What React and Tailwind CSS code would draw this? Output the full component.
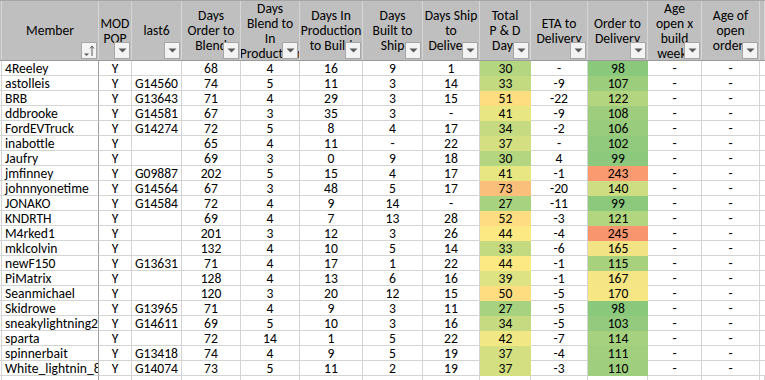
import React from 'react';

// column widths, in px, left to right (first and last are the neighbouring slivers)
const cols = [
  { w: 'w-[2px]' },
  { w: 'w-[97px]', head: ['Member'], sort: true, left: true },
  { w: 'w-[33px]', head: ['MOD', 'POP'] },
  { w: 'w-[50px]', head: ['last6'] },
  { w: 'w-[59px]', head: ['Days', 'Order to', 'Blend'] },
  { w: 'w-[59px]', head: ['Days', 'Blend to', 'In', 'Production'] },
  { w: 'w-[63px]', head: ['Days In', 'Production', 'to Build'] },
  { w: 'w-[60px]', head: ['Days', 'Built to', 'Ship'] },
  { w: 'w-[57px]', head: ['Days Ship', 'to', 'Delivery'] },
  { w: 'w-[51px]', head: ['Total', 'P & D', 'Days'] },
  { w: 'w-[57px]', head: ['ETA to', 'Delivery'] },
  { w: 'w-[60px]', head: ['Order to', 'Delivery'] },
  { w: 'w-[54px]', head: ['Age', 'open x', 'build', 'weeks'] },
  { w: 'w-[58px]', head: ['Age of', 'open', 'orders'] },
  { w: 'w-[5px]' },
];

// member, mod pop, last6, order>blend, blend>prod, prod>build, built>ship, ship>deliver, total, eta, order>delivery
const rows = [
  ['4Reeley', 'Y', '', 68, 4, 16, 9, 1, 30, '-', 98, 'bg-[#b5d680]', 'bg-[#8ac97c]'],
  ['astolleis', 'Y', 'G14560', 74, 5, 11, 3, 14, 33, -9, 107, 'bg-[#c3da81]', 'bg-[#9bcd7d]'],
  ['BRB', 'Y', 'G13643', 71, 4, 29, 3, 15, 51, -22, 122, 'bg-[#fedd81]', 'bg-[#b4d57f]'],
  ['ddbrooke', 'Y', 'G14581', 67, 3, 35, 3, '-', 41, -9, 108, 'bg-[#e8e583]', 'bg-[#9dcd7d]'],
  ['FordEVTruck', 'Y', 'G14274', 72, 5, 8, 4, 17, 34, -2, 106, 'bg-[#c6db81]', 'bg-[#99cc7d]'],
  ['inabottle', 'Y', '', 65, 4, 11, '-', 22, 37, '-', 102, 'bg-[#d4df82]', 'bg-[#92ca7d]'],
  ['Jaufry', 'Y', '', 69, 3, 0, 9, 18, 30, 4, 99, 'bg-[#b5d680]', 'bg-[#8cc97c]'],
  ['jmfinney', 'Y', 'G09887', 202, 5, 15, 4, 17, 41, -1, 243, 'bg-[#e8e583]', 'bg-[#f99a71]'],
  ['johnnyonetime', 'Y', 'G14564', 67, 3, 48, 5, 17, 73, -20, 140, 'bg-[#fbbf7c]', 'bg-[#cfdd82]'],
  ['JONAKO', 'Y', 'G14584', 72, 4, 9, 14, '-', 27, -11, 99, 'bg-[#a7d27f]', 'bg-[#8cc97c]'],
  ['KNDRTH', 'Y', '', 69, 4, 7, 13, 28, 52, -3, 121, 'bg-[#fedc81]', 'bg-[#b2d57f]'],
  ['M4rked1', 'Y', '', 201, 3, 12, 3, 26, 44, -4, 245, 'bg-[#fde983]', 'bg-[#f8956f]'],
  ['mklcolvin', 'Y', '', 132, 4, 10, 5, 14, 33, -6, 165, 'bg-[#c3da81]', 'bg-[#f2e484]'],
  ['newF150', 'Y', 'G13631', 71, 4, 17, 1, 22, 44, -1, 115, 'bg-[#fde983]', 'bg-[#a8d17e]'],
  ['PiMatrix', 'Y', '', 128, 4, 13, 6, 16, 39, -1, 167, 'bg-[#dde283]', 'bg-[#f5e584]'],
  ['Seanmichael', 'Y', '', 120, 3, 20, 12, 15, 50, -5, 170, 'bg-[#fedd81]', 'bg-[#f7e684]'],
  ['Skidrowe', 'Y', 'G13965', 71, 4, 9, 3, 11, 27, -5, 98, 'bg-[#a7d27f]', 'bg-[#8ac97c]'],
  ['sneakylightning2', 'Y', 'G14611', 69, 5, 10, 3, 16, 34, -5, 103, 'bg-[#c6db81]', 'bg-[#93ca7d]'],
  ['sparta', 'Y', '', 72, 14, 1, 5, 22, 42, -7, 114, 'bg-[#f1e784]', 'bg-[#a6d17e]'],
  ['spinnerbait', 'Y', 'G13418', 74, 4, 9, 5, 19, 37, -4, 111, 'bg-[#d4df82]', 'bg-[#a1cf7e]'],
  ['White_lightnin_8', 'Y', 'G14074', 73, 5, 11, 2, 19, 37, -3, 110, 'bg-[#d4df82]', 'bg-[#9fce7e]'],
];

function FilterButton({ sort }) {
  return (
    <div className="absolute right-[1px] bottom-[1px] w-[16px] h-[17px] border border-[#a6a6a6] bg-[#f3f3f3] flex items-center justify-center">
      {sort ? (
        <svg width="14" height="15" viewBox="0 0 14 15">
          <path d="M2 10.5h5l-2.5 2.5z" fill="#595959" />
          <path d="M10 13V3" stroke="#595959" strokeWidth="1" />
          <path d="M8 5.5l2-2.5 2 2.5" stroke="#595959" strokeWidth="1" fill="none" />
        </svg>
      ) : (
        <svg width="9" height="5" viewBox="0 0 9 5">
          <path d="M0.5 0.5h8l-4 4z" fill="#595959" />
        </svg>
      )}
    </div>
  );
}

function HeaderRow() {
  return (
    <div className="flex h-[61px] border-t border-[#a6a6a6] border-b border-b-[#9b9b9b] bg-[#bfbfbf]">
      {cols.map((c, i) => (
        <div key={i} className={`relative shrink-0 h-full ${c.w} border-r border-[#d6d6d6] overflow-hidden flex flex-col justify-center items-center`}>
          {c.head && c.head.map((l, j) => (
            <div key={j} className="whitespace-nowrap leading-[15px]">{l}</div>
          ))}
          {(c.head || i === 0) && <FilterButton sort={c.sort} />}
        </div>
      ))}
    </div>
  );
}

function DataRow({ r }) {
  const [name, mod, last6, a, b, c, d, e, total, eta, order, totalBg, orderBg] = r;
  const vals = [mod, last6, a, b, c, d, e, total, eta, order, '-', '-'];
  return (
    <div className="flex h-[15px] leading-[15px]">
      <div className="shrink-0 w-[2px] border-r border-b border-[#d4d4d4]" />
      <div className="shrink-0 w-[97px] pl-[3px] border-r border-r-[#9e9e9e] border-b border-b-[#d4d4d4] whitespace-nowrap overflow-hidden">{name}</div>
      {vals.map((v, i) => {
        const w = cols[i + 2].w;
        const bg = i === 7 ? totalBg : i === 9 ? orderBg : '';
        return (
          <div key={i} className={`shrink-0 ${w} text-center whitespace-nowrap overflow-hidden ${bg ? bg : 'border-r border-b border-[#d4d4d4]'}`}>
            {v}
          </div>
        );
      })}
      <div className="shrink-0 w-[5px] border-b border-[#d4d4d4]" />
    </div>
  );
}

export default function App() {
  return (
    <div className="w-[765px] h-[380px] overflow-hidden bg-white text-black text-[13.6px]" style={{ fontFamily: "Carlito, 'Liberation Sans', Arial, sans-serif" }}>
      <HeaderRow />
      {rows.map(r => <DataRow key={r[0]} r={r} />)}
      <div className="flex h-[10px]">
        {cols.map((c, i) => (
          <div key={i} className={`shrink-0 ${c.w} ${i === 1 ? 'border-r border-[#9e9e9e]' : 'border-r border-[#d4d4d4]'}`} />
        ))}
      </div>
    </div>
  );
}
